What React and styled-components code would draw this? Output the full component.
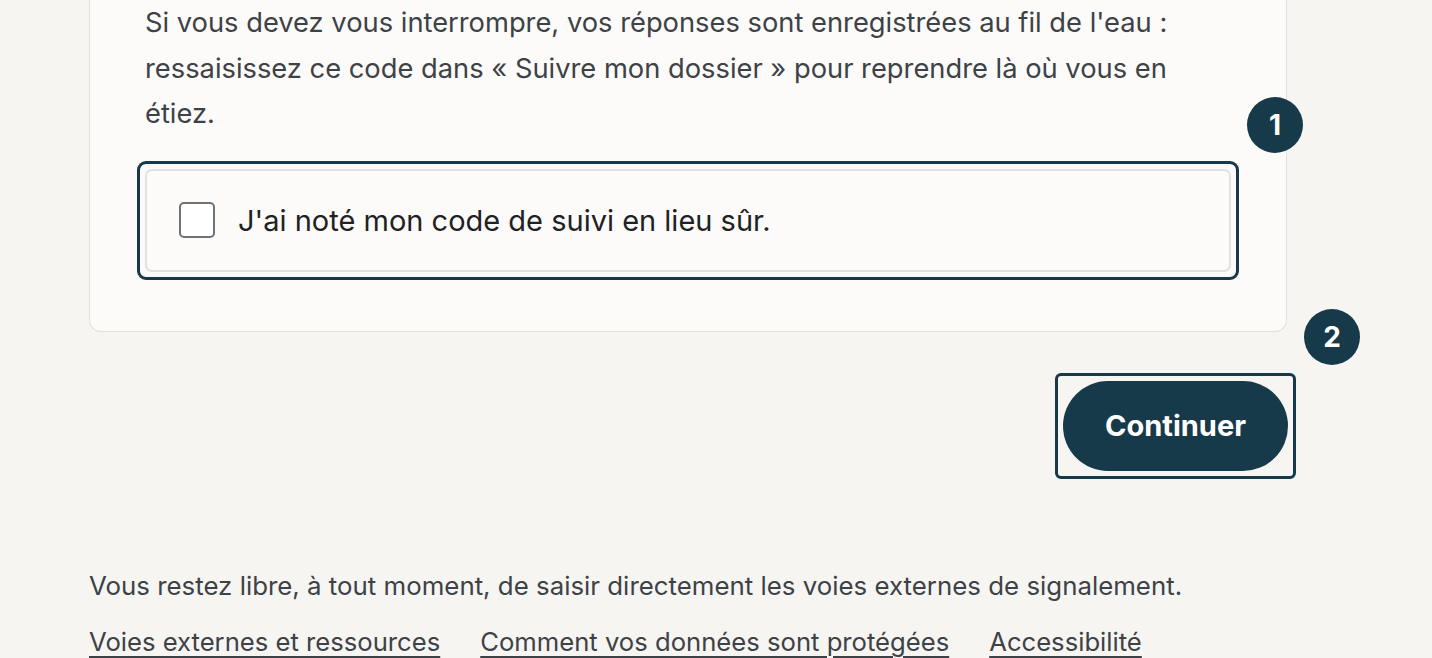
import React from "react";
import styled, { createGlobalStyle } from "styled-components";

const Global = createGlobalStyle`
  html, body { margin: 0; padding: 0; background: #f6f5f2; }
  body { font-family: Inter, "Noto Sans", sans-serif; color: #3d4247; -webkit-font-smoothing: antialiased; }
  * { box-sizing: border-box; }
`;

const Page = styled.main`
  width: 1198px;
  margin-left: 89px;
  display: flex;
  flex-direction: column;
`;

const Card = styled.section`
  background: #fcfbf9;
  border: 1px solid #e4e1dc;
  border-top: 0;
  border-radius: 0 0 12px 12px;
  padding: 0 55px 51px 55px;
  display: flex;
  flex-direction: column;
  gap: 24px;
`;

const Paragraph = styled.p`
  margin: 0;
  font-size: 27.3px;
  line-height: 45.5px;
  color: #3d4247;
`;

const Frame = styled.div`
  position: relative;
  border: 3px solid #173a4a;
  border-radius: ${(p) => p.$radius || 8}px;
  padding: 5px;
  margin: 0 -8px;
`;

const Badge = styled.span`
  position: absolute;
  top: -67px;
  right: -67px;
  width: 56px;
  height: 56px;
  border-radius: 50%;
  background: #173a4a;
  color: #fff;
  font-size: 28px;
  font-weight: 700;
  display: flex;
  align-items: center;
  justify-content: center;
`;

const CheckLabel = styled.label`
  display: flex;
  align-items: center;
  gap: 23px;
  height: 103px;
  padding: 0 32px;
  border: 2px solid #e4e1dc;
  border-radius: 7px;
  background: #fcfbf9;
  font-size: 29px;
  color: #1e2225;
  cursor: pointer;
`;

const Box = styled.span`
  width: 36px;
  height: 36px;
  flex: none;
  border: 2px solid #6f7275;
  border-radius: 5px;
  background: #fff;
`;

const Actions = styled.div`
  display: flex;
  justify-content: flex-end;
  margin-top: 41px;
  margin-right: -9px;
`;

const ButtonFrame = styled(Frame)`
  margin: 0;
`;

const Button = styled.button`
  height: 90px;
  padding: 0 42px;
  border: 0;
  border-radius: 45px;
  background: #173a4a;
  color: #fff;
  font-family: Inter, sans-serif;
  font-size: 29px;
  font-weight: 700;
  display: block;
  cursor: pointer;
`;

const Footer = styled.footer`
  margin-top: 89px;
  display: flex;
  flex-direction: column;
  gap: 20px;
`;

const FooterText = styled.p`
  margin: 0;
  font-size: 25.85px;
  line-height: 36px;
  color: #3d4247;
`;

const Links = styled.nav`
  display: flex;
  gap: 40px;
`;

const Link = styled.a`
  font-size: 25.65px;
  line-height: 36px;
  color: #3d4247;
  text-decoration: underline;
  text-underline-offset: 5px;
  text-decoration-thickness: 2px;
`;

export default function App() {
  return (
    <>
      <Global />
      <Page>
        <Card>
          <Paragraph>
            Si vous devez vous interrompre, vos réponses sont enregistrées au fil de l'eau :
            ressaisissez ce code dans « Suivre mon dossier » pour reprendre là où vous en
            étiez.
          </Paragraph>
          <Frame $radius={9}>
            <Badge>1</Badge>
            <CheckLabel>
              <Box />
              J'ai noté mon code de suivi en lieu sûr.
            </CheckLabel>
          </Frame>
        </Card>
        <Actions>
          <ButtonFrame $radius={6}>
            <Badge>2</Badge>
            <Button>Continuer</Button>
          </ButtonFrame>
        </Actions>
        <Footer>
          <FooterText>
            Vous restez libre, à tout moment, de saisir directement les voies externes de signalement.
          </FooterText>
          <Links>
            <Link href="#">Voies externes et ressources</Link>
            <Link href="#">Comment vos données sont protégées</Link>
            <Link href="#">Accessibilité</Link>
          </Links>
        </Footer>
      </Page>
    </>
  );
}
